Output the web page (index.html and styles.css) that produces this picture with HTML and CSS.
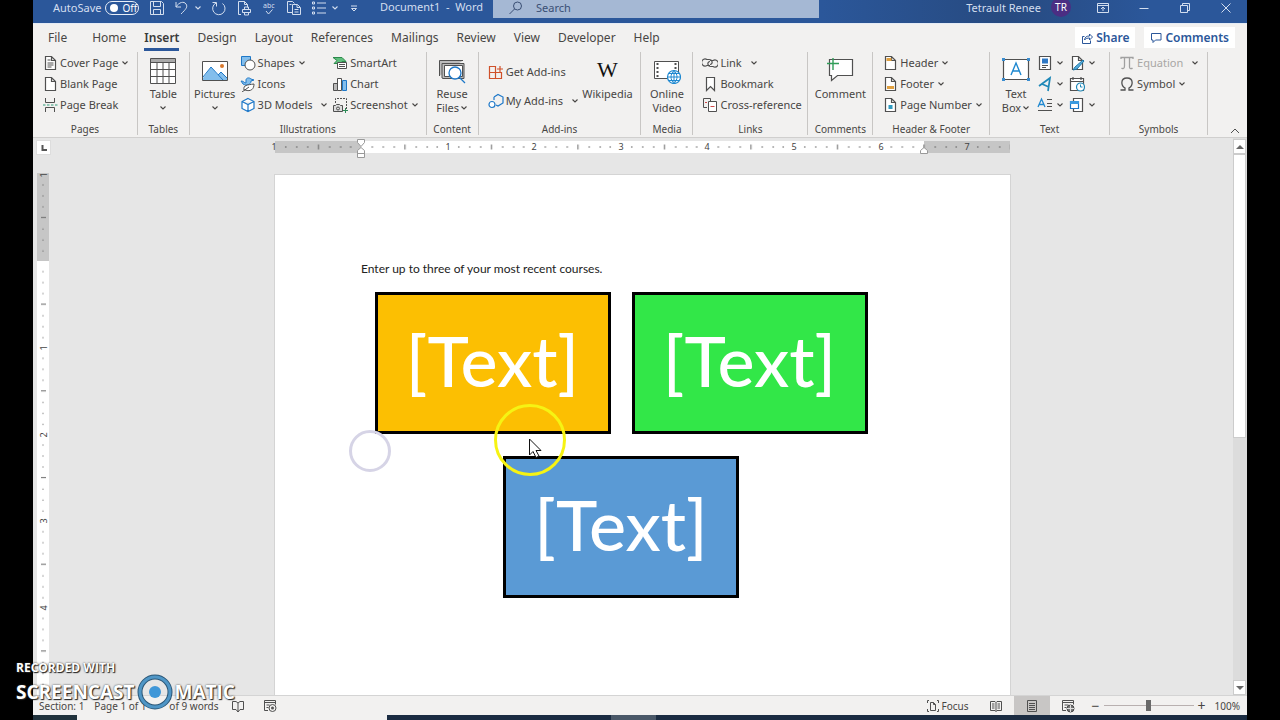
FILE: index.html
```html
<!DOCTYPE html>
<html lang="en">
<head>
<meta charset="utf-8">
<title>Document1 - Word</title>
<link rel="stylesheet" href="styles.css">
</head>
<body>
<svg class="defs" aria-hidden="true">
  <symbol id="chev" viewBox="0 0 8 8"><path d="M1.5 2.5 4 5l2.5-2.5" fill="none" stroke="currentColor" stroke-width="1.1"/></symbol>
  <symbol id="sheet" viewBox="0 0 16 16"><path d="M3.5 1.500h6l4 4v9h-10zM9.500 1.500v4h4" fill="#fff" stroke="#505050" stroke-width="1.200"/></symbol>
</svg>
<div class="app">
  <header class="titlebar">
    <div class="quick">
      <label class="autosave">AutoSave <input type="checkbox" class="sr"><span class="toggle"><i></i>Off</span></label>
      <button aria-label="Save"><svg width="16" height="16" viewBox="0 0 16 16"><path d="M1.500 1.500h11l2 2v11h-13zM4.500 1.500v5h7v-5M4.500 14.500v-5h7v5"/></svg></button>
      <button aria-label="Undo" class="undo"><svg width="16" height="16" viewBox="0 0 16 16"><path d="M2 2v5h5M2 7c3-5 8-6 10-3s0 5-5 10"/></svg><svg class="chev"><use href="#chev"/></svg></button>
      <button aria-label="Repeat"><svg width="16" height="16" viewBox="0 0 16 16"><path d="M1.500 2.500h4v4M5 3a6.200 6.200 0 1 0 6.500.5"/></svg></button>
      <button aria-label="Print preview"><svg width="16" height="16" viewBox="0 0 16 16"><path d="M5 14.500H2.500v-13h6l3 3v3M8.500 1.500v3h3M6.500 12.500v-3h8v3zM8.500 9v-2h4v2M8.500 12v3h4v-3"/></svg></button>
      <button aria-label="Spelling"><svg width="16" height="16" viewBox="0 0 16 16"><text x="2" y="8" class="abc">abc</text><path d="m5 11 2.500 3 4-4.500"/></svg></button>
      <button aria-label="Copy"><svg width="16" height="16" viewBox="0 0 16 16"><path d="M6 12.500H1.500v-11h5l2 2M6.500 4.500h5l3 3v7h-8zM11 4.500v3h3M8.500 9.500h4M8.500 12h4M3.500 4.500h2"/></svg></button>
      <button aria-label="Bullets" class="undo"><svg width="16" height="16" viewBox="0 0 16 16"><path d="M6 3h9M6 8h9M6 13h9"/><path d="M1.500 2h2v2h-2zM1.500 7h2v2h-2zM1.500 12h2v2h-2z"/></svg><svg class="chev"><use href="#chev"/></svg></button>
      <button aria-label="Customize"><svg width="16" height="16" viewBox="0 0 16 16"><path d="M3 6h6M3.500 8.500 6 11l2.500-2.500z"/></svg></button>
    </div>
    <div class="doc">Document1&nbsp; -&nbsp; Word</div>
    <label class="search"><svg width="14" height="14" viewBox="0 0 14 14"><circle cx="8.500" cy="5" r="4"/><path d="m5.500 8-5 5"/></svg><input type="text" placeholder="Search" aria-label="Search"></label>
    <div class="account"><span>Tetrault Renee</span><span class="avatar">TR</span></div>
    <div class="win">
      <button aria-label="Ribbon display options"><svg width="14" height="14" viewBox="0 0 14 14"><path d="M1.500 2.500h11v9h-11zM1.500 4.500h11M7 10V6M5 8l2-2 2 2"/></svg></button>
      <button aria-label="Minimize"><svg width="14" height="14" viewBox="0 0 14 14"><path d="M2.500 7.500h9"/></svg></button>
      <button aria-label="Restore"><svg width="14" height="14" viewBox="0 0 14 14"><path d="M2.500 4.500h7v7h-7zM4.500 4.500v-2h7v7h-2"/></svg></button>
      <button aria-label="Close"><svg width="14" height="14" viewBox="0 0 14 14"><path d="m2.500 2.500 9 9M11.500 2.500l-9 9"/></svg></button>
    </div>
  </header>

  <nav class="tabs">
    <button class="file">File</button><button>Home</button><button class="on">Insert</button><button>Design</button><button>Layout</button><button>References</button><button>Mailings</button><button>Review</button><button>View</button><button>Developer</button><button>Help</button>
    <span class="grow"></span>
    <button class="pill"><svg width="12" height="12" viewBox="0 0 12 12"><path d="M3.500 4.500h-2v7h8v-3M3.500 8c.5-3 2-4 5-4V2l3 3-3 3V6c-2 0-4 .5-5 2z"/></svg>Share</button>
    <button class="pill"><svg width="12" height="12" viewBox="0 0 12 12"><path d="M1.500 1.500h9.500v6.500H5.500L3 10.500V8H1.500z"/></svg>Comments</button>
  </nav>

  <section class="ribbon">
    <div class="group"><div class="tools pages">
      <div class="stack">
        <button><svg class="ic"><use href="#sheet"/><path d="M5.500 5h3M5.500 8h6M5.500 10h6M5.500 12h4" class="k"/></svg>Cover Page<svg class="chev"><use href="#chev"/></svg></button>
        <button><svg class="ic"><use href="#sheet"/></svg>Blank Page</button>
        <button><svg class="ic"><path d="M3.500 1v4.500h9V1M3.500 15v-4.500h9V15" class="k"/><path d="M1 8h2.500M5 8h2.500M9 8h2.500M13 8h2.500" stroke="#2e9a78"/></svg>Page Break</button>
      </div></div><h2>Pages</h2></div>
    <div class="group"><div class="tools one">
      <button class="big"><svg width="26" height="26" viewBox="0 0 26 26"><path d="M.5.5h25v25H.5z" fill="#fff"/><path d="M.5.5h25v4H.5z" fill="#aaa"/><path d="M.5.5h25v25H.5zM.5 4.500h25M.5 11.500h25M.5 18.500h25M7 4.500v21M13 4.500v21M19 4.500v21" class="k"/></svg><span>Table</span><svg class="chev"><use href="#chev"/></svg></button>
      </div><h2>Tables</h2></div>
    <div class="group"><div class="tools illus">
      <button class="big"><svg width="26" height="26" viewBox="0 0 26 26"><path d="M.5 3.500h25v19H.5z" fill="#fff"/><path d="M1 20 9 9l7 8 3-3 6 6v2H1z" fill="#83beec"/><path d="m1 19 8-10 12 13M16 17l3-3 6 6" fill="none" stroke="#1e78c8"/><circle cx="20" cy="8" r="2" fill="#d8782c"/><path d="M.5 3.500h25v19H.5z" class="k"/></svg><span>Pictures</span><svg class="chev"><use href="#chev"/></svg></button>
      <div class="stack">
        <button><svg class="ic"><path d="M1.500 1.500h9v9h-9z" fill="#83beec" stroke="#1e78c8"/><circle cx="10" cy="10" r="5" fill="#fff" stroke="#505050"/></svg>Shapes<svg class="chev"><use href="#chev"/></svg></button>
        <button><svg class="ic"><path d="M1 5c3 0 3 2 5 2V4c0-2 3-3 5-1l3 1-3 1c0 4-5 5-8 3z" fill="#83beec" stroke="#1e78c8"/><path d="M4 14c-1-5 3-5 10-6 0 5-3 8-9 6zM2 16l7-5" fill="#fff" stroke="#505050"/></svg>Icons</button>
        <button><svg class="ic"><path d="m8 1.500 6 3v7l-6 3-6-3v-7zM2 4.500l6 3 6-3M8 7.500v7" fill="#fff" stroke="#1e78c8" stroke-width="1.200"/></svg>3D Models<svg class="chev far"><use href="#chev"/></svg></button>
      </div>
      <div class="stack">
        <button><svg class="ic"><path d="M1 2.500h9l4 4h-4v2H2l3-3z" fill="#5fbf7c" stroke="#2d8a4c"/><path d="M5.500 7.500h9v6h-9z" fill="#fff" stroke="#505050"/><path d="M7 9.500h6M7 11.500h6" class="k"/></svg>SmartArt</button>
        <button><svg class="ic"><path d="M1.500 7.500h4v7h-4z" fill="#bbb" stroke="#505050"/><path d="M5.500 2.500h4v12h-4z" fill="#fff" stroke="#505050"/><path d="M10.500 4.500h4v10h-4z" fill="#83beec" stroke="#1e78c8"/></svg>Chart</button>
        <button><svg class="ic"><path d="M3.500 6V1.500h11V12" fill="none" stroke="#505050" stroke-dasharray="2 1"/><path d="M1.500 8.500h2l1-1h3l1 1h2v6h-9z" fill="#ddd" stroke="#505050"/><circle cx="6" cy="11.500" r="1.500" class="k"/><path d="M11 13.500h5M13.500 11v5" stroke="#2e8a58"/></svg>Screenshot<svg class="chev"><use href="#chev"/></svg></button>
      </div></div><h2>Illustrations</h2></div>
    <div class="group"><div class="tools one">
      <button class="big"><svg width="28" height="26" viewBox="0 0 28 26"><path d="M1.500 18V2.500H25M4 20V5.500h22v15H5z" fill="#bbb" stroke="#505050"/><path d="M6.500 7.500h18v11h-18z" fill="#fff" stroke="#505050"/><circle cx="17" cy="15" r="6" fill="#fff" stroke="#1e78c8" stroke-width="1.300"/><path d="m21 19 6 6" stroke="#1e78c8" stroke-width="1.300"/></svg><span>Reuse</span><span>Files<svg class="chev"><use href="#chev"/></svg></span></button>
      </div><h2>Content</h2></div>
    <div class="group"><div class="tools addins">
      <div class="stack two">
        <button><svg class="ic"><path d="M1.500 2.500h6v12h-6zM1.500 8.500h12v6h-12zM7.500 8.500v6" fill="none" stroke="#d0512a" stroke-width="1.200"/><path d="M9 5h6M12 2v6" stroke="#d0512a" stroke-width="1.200"/></svg>Get Add-ins</button>
        <button><svg class="ic"><path d="m6 4 4-2.500L15 4v6l-5 3-2-1M6 4v3" fill="none" stroke="#1e78c8" stroke-width="1.200"/><circle cx="4" cy="11.500" r="3" fill="#fff" stroke="#1e78c8" stroke-width="1.200"/></svg>My Add-ins<svg class="chev far"><use href="#chev"/></svg></button>
      </div>
      <button class="big"><b class="wiki">W</b><span>Wikipedia</span></button>
      </div><h2>Add-ins</h2></div>
    <div class="group"><div class="tools one">
      <button class="big"><svg width="28" height="26" viewBox="0 0 28 26"><path d="M1.500 3.500h24v17h-24z" fill="#fff" stroke="#505050"/><path d="M4.500 5v15M22.500 5v9" stroke="#505050" stroke-width="2" stroke-dasharray="2 2"/><circle cx="21" cy="19" r="6.500" fill="#fff" stroke="#1e88d0" stroke-width="1.200"/><path d="M14.500 19h13M21 12.500v13M16 15.500h10M16 22.500h10M21 12.500c-4 4-4 9 0 13 4-4 4-9 0-13" fill="none" stroke="#1e88d0"/></svg><span>Online</span><span>Video</span></button>
      </div><h2>Media</h2></div>
    <div class="group"><div class="tools links">
      <div class="stack">
        <button><svg class="ic"><path d="M8 10.500H5a3.500 3.500 0 1 1 0-6h2c4 0 4 5 1 5M8 5.500h3a3.500 3.500 0 1 1 0 6h-2c-4 0-4-5-1-5" fill="none" stroke="#505050" stroke-width="1.200"/></svg>Link<svg class="chev mid"><use href="#chev"/></svg></button>
        <button><svg class="ic"><path d="M4.500 1.500h8v13l-4-4-4 4z" fill="#fff" stroke="#505050" stroke-width="1.200"/></svg>Bookmark</button>
        <button><svg class="ic"><path d="M5 10.500H1.500v-9h7V4" fill="none" stroke="#505050"/><path d="M6.500 4.500h8v10h-8z" fill="#fff" stroke="#505050"/><path d="M3 5.500h2M8.500 9.500h4" stroke="#d04848"/></svg>Cross-reference</button>
      </div></div><h2>Links</h2></div>
    <div class="group"><div class="tools one">
      <button class="big"><svg width="28" height="26" viewBox="0 0 28 26"><path d="M3.500 1.500h23v16h-15l-6 5v-5h-2z" fill="#fff" stroke="#505050" stroke-width="1.200"/><path d="M1 5.500h12M7 0v12" stroke="#2f9d57" stroke-width="1.400"/></svg><span>Comment</span></button>
      </div><h2>Comments</h2></div>
    <div class="group"><div class="tools links">
      <div class="stack">
        <button><svg class="ic"><use href="#sheet"/><path d="M4.500 3h5v3h-5z" fill="#e0a040"/></svg>Header<svg class="chev"><use href="#chev"/></svg></button>
        <button><svg class="ic"><use href="#sheet"/><path d="M5 10h7v3H5z" fill="#e0a040"/></svg>Footer<svg class="chev"><use href="#chev"/></svg></button>
        <button><svg class="ic"><use href="#sheet"/><path d="M6.500 8h4v4h-4z" fill="#2e9ac0"/></svg>Page Number<svg class="chev"><use href="#chev"/></svg></button>
      </div></div><h2>Header &amp; Footer</h2></div>
    <div class="group"><div class="tools textg">
      <button class="big"><svg width="30" height="26" viewBox="0 0 30 26"><path d="M2.500 1.500h25v20h-25z" fill="#fff" stroke="#505050" stroke-width="1.200"/><path d="M1 0h3v3H1zM26 0h3v3h-3zM1 20h3v3H1zM26 20h3v3h-3z" fill="#3a8dd0"/><path d="m10 17 5-12 5 12M12 13h6" fill="none" stroke="#1e88d0" stroke-width="1.400"/></svg><span>Text</span><span>Box<svg class="chev"><use href="#chev"/></svg></span></button>
      <div class="stack">
        <button aria-label="Quick Parts"><svg class="ic"><path d="M2.500 1.500h11v13h-11z" fill="#fff" stroke="#505050" stroke-width="1.200"/><path d="M5 3.500h6v5H5z" fill="#2f78c4"/><path d="M5 10.500h6M5 12.500h4" class="k"/></svg><svg class="chev"><use href="#chev"/></svg></button>
        <button aria-label="WordArt"><svg class="ic"><path d="M2 10 13 2l-2 13M5 8l7 3" fill="none" stroke="#1e88b8" stroke-width="1.700"/></svg><svg class="chev"><use href="#chev"/></svg></button>
        <button aria-label="Drop Cap"><svg class="ic"><path d="m1 10 3.500-8L8 10M2.500 7.500h4" fill="none" stroke="#1e88d0" stroke-width="1.300"/><path d="M10 2.500h5M10 6.500h5M10 9.500h5M1 13.500h14" class="k"/></svg><svg class="chev"><use href="#chev"/></svg></button>
      </div>
      <div class="stack">
        <button aria-label="Signature Line"><svg class="ic"><use href="#sheet"/><path d="m14 5-8 7-2 3 4-1 7-8z" fill="#5aaede" stroke="#1e78a8"/></svg><svg class="chev"><use href="#chev"/></svg></button>
        <button aria-label="Date and Time"><svg class="ic"><path d="M1.500 2.500h13v12h-13zM1.500 5.500h13M4 1v3M12 1v3" fill="#fff" stroke="#505050" stroke-width="1.200"/><circle cx="11.500" cy="11" r="4" fill="#fff" stroke="#1e88b8" stroke-width="1.200"/><path d="M11.500 8.500V11h2" fill="none" stroke="#1e88b8"/></svg></button>
        <button aria-label="Object"><svg class="ic"><path d="M4.500 1.500h9v13h-9z" fill="#fff" stroke="#505050" stroke-width="1.200"/><path d="M1.500 4.500h8v7h-8z" fill="#fff" stroke="#1e78c8" stroke-width="1.200"/><path d="M1 4h9v3H1z" fill="#3a9ae0"/></svg><svg class="chev"><use href="#chev"/></svg></button>
      </div></div><h2>Text</h2></div>
    <div class="group"><div class="tools links">
      <div class="stack">
        <button class="off"><svg class="ic"><path d="M2 4V2.500h12V4M5.500 3v8c0 3-2 3-3 2M10.500 3v9c0 2 2 2 3 1" fill="none" stroke="#a0a0a0" stroke-width="1.300"/></svg>Equation<svg class="chev mid"><use href="#chev"/></svg></button>
        <button><svg class="ic"><path d="M1.500 14H6v-2C2 10 1 2 8 2s6 8 2 10v2h4.500" fill="none" stroke="#505050" stroke-width="1.300"/></svg>Symbol<svg class="chev"><use href="#chev"/></svg></button>
      </div></div><h2>Symbols</h2></div>
    <div class="collapse"><button aria-label="Collapse the Ribbon"><svg width="10" height="8" viewBox="0 0 10 8"><path d="m1 6 4-4 4 4" class="k"/></svg></button></div>
  </section>

  <main class="work">
    <div class="corner"><svg width="8" height="8" viewBox="0 0 8 8"><path d="M2.500 1v5H7" fill="none" stroke="#555" stroke-width="2"/></svg></div>
    <div class="hruler"><svg width="735" height="22" viewBox="0 0 735 22">
      <defs><pattern id="ticks" width="86.500" height="12" patternUnits="userSpaceOnUse" y="3"><path d="M10 6h1.500M21 6h1.500M32 6h1.500M54 6h1.500M65 6h1.500M75 6h1.500" stroke="#555"/><path d="M43.500 3.500v5" stroke="#666"/></pattern></defs>
      <path d="M0 3h735v12H0z" fill="#c6c6c6"/><path d="M86 3h563v12H86z" fill="#fff"/>
      <path d="M0 3h735v12H0z" fill="url(#ticks)"/>
      <g class="num"><text x="-1" y="12">1</text><text x="173" y="12">1</text><text x="259" y="12">2</text><text x="346" y="12">3</text><text x="432" y="12">4</text><text x="519" y="12">5</text><text x="606" y="12">6</text><text x="692" y="12">7</text></g>
      <path d="M82.500 1.500h7v3l-3.500 4-3.500-4zM86 9.500l3.500 3v7h-7v-7zM82.500 15.500h7M649 9.500l3.500 3v3h-7v-3z" fill="#fff" stroke="#999"/>
    </svg></div>
    <div class="scroll">
      <button aria-label="Scroll up"><svg width="8" height="6" viewBox="0 0 8 6"><path d="M0 5h8L4 1z" fill="#666"/></svg></button>
      <div class="track"><div class="thumb"></div></div>
      <button aria-label="Scroll down"><svg width="8" height="6" viewBox="0 0 8 6"><path d="M0 1h8L4 5z" fill="#666"/></svg></button>
    </div>
    <div class="vruler"><svg width="12" height="540" viewBox="0 0 12 540">
      <defs><pattern id="vticks" width="12" height="86.700" patternUnits="userSpaceOnUse" y="1"><path d="M5.500 11h1M5.500 22h1M5.500 33h1M5.500 55h1M5.500 66h1M5.500 77h1" stroke="#555"/><path d="M4 43.500h5" stroke="#666"/></pattern></defs>
      <path d="M0 0h12v540H0z" fill="#fff"/><path d="M0 0h12v88H0z" fill="#c6c6c6"/>
      <path d="M0 0h12v540H0z" fill="url(#vticks)"/>
      <g class="num"><text transform="translate(10 2) rotate(-90)">1</text><text transform="translate(10 175) rotate(-90)">1</text><text transform="translate(10 262) rotate(-90)">2</text><text transform="translate(10 348) rotate(-90)">3</text><text transform="translate(10 435) rotate(-90)">4</text></g>
    </svg></div>
    <div class="canvas">
      <article class="page">
        <p>Enter up to three of your most recent courses.</p>
        <div class="shapes"><div class="shape gold">[Text]</div><div class="shape green">[Text]</div><div class="shape blue">[Text]</div></div>
      </article>
    </div>
  </main>

  <footer class="status">
    <span>Section: 1</span><span class="pg">Page 1 of 1</span><span class="words">of 9 words</span>
    <button aria-label="Proofing"><svg width="14" height="14" viewBox="0 0 14 14"><path d="M1.500 2.500H5l2 1.500 2-1.500h3.500v8H9L7 13l-2-2.500H1.500zM7 4v9" class="k"/></svg></button>
    <button aria-label="Macros" class="macro"><svg width="14" height="14" viewBox="0 0 14 14"><path d="M5 11.500H1.500v-10h11v4M1.500 3.500h11M3.500 6h3M3.500 8.500h2" class="k"/><circle cx="9.500" cy="9" r="3.500" class="k"/><circle cx="9.500" cy="9" r="1.500" fill="#555"/></svg></button>
    <span class="grow"></span>
    <button class="focus"><svg width="14" height="14" viewBox="0 0 14 14"><path d="M1.500 4V1.500H3M1.500 10v2.500H3M11 1.500h1.500V4M11 12.500h1.500V10M4.500 3.500h3l2 2v6h-5zM7.500 3.500v2h2" class="k"/></svg>Focus</button>
    <button class="view" aria-label="Read Mode"><svg width="14" height="14" viewBox="0 0 14 14"><path d="M1.500 2.500H6l1 1 1-1h4.500v9H8l-1 1-1-1H1.500zM7 3.500v9M3 5h2.500M3 7h2.500M3 9h2.500M8.500 5H11M8.500 7H11M8.500 9H11" class="k"/></svg></button>
    <button class="view sel" aria-label="Print Layout"><svg width="14" height="14" viewBox="0 0 14 14"><path d="M2.500 1.500h9v11h-9zM4 4.500h6M4 6.500h6M4 8.500h6M4 10.500h6" class="k"/></svg></button>
    <button class="view" aria-label="Web Layout"><svg width="14" height="14" viewBox="0 0 14 14"><path d="M5 11.500H1.500v-10h11v4M1.500 3.500h11M3.500 6h4M3.500 8.500h2" class="k"/><circle cx="9.500" cy="9.500" r="3.500" fill="#777" stroke="#444"/><path d="M6 9.500h7M9.500 6v7" stroke="#ddd"/></svg></button>
    <div class="zoomer"><button aria-label="Zoom out">−</button><input type="range" min="0" max="100" value="50" aria-label="Zoom"><button aria-label="Zoom in">+</button></div>
    <span class="pct">100%</span>
  </footer>
  <div class="taskbar"><i class="t1"></i><i class="t2"></i><i class="t3"></i></div>
</div>

<svg class="overlay halo" width="44" height="44" viewBox="0 0 44 44"><circle cx="22" cy="22" r="19.500" fill="none" stroke="#d6d4e6" stroke-width="3"/></svg>
<svg class="overlay pointer" width="74" height="74" viewBox="0 0 74 74"><circle cx="37" cy="37" r="34.500" fill="none" stroke="#f6f313" stroke-width="3"/><path d="M36.500 36v16l3.500-3.500 3 6 3-1.500-3-5.500h5z" fill="#fff" stroke="#111"/></svg>
<div class="overlay mark"><div class="rec">RECORDED WITH</div><div class="brand"><span>SCREENCAST</span><svg width="36" height="36" viewBox="0 0 36 36"><circle cx="18" cy="18" r="15" fill="none" stroke="#2c5878" stroke-width="5"/><circle cx="18" cy="18" r="15" fill="none" stroke="#4f96c6" stroke-width="3"/><circle cx="18" cy="18" r="6" fill="#3f97d8"/></svg><span>MATIC</span></div></div>
</body>
</html>
```
FILE: styles.css
```css
* { box-sizing: border-box; }
body { margin: 0; padding: 0 33px; background: #000; font: 11px/14px "Noto Sans", "Open Sans", sans-serif; color: #484644; overflow: hidden; }
button { font: inherit; color: inherit; background: none; border: 0; padding: 0; margin: 0; display: flex; align-items: center; white-space: nowrap; }
svg { flex: none; display: block; }
.defs { position: absolute; width: 0; height: 0; }
.sr { position: absolute; opacity: 0; width: 1px; height: 1px; }
.grow { flex: 1; }
.k { fill: none; stroke: #505050; }
.chev { width: 8px; height: 8px; margin-left: 1px; color: #484644; }
.app { height: 100vh; display: flex; flex-direction: column; background: #f2f1f0; }

.titlebar { height: 23px; flex: none; background: linear-gradient(90deg, #2b579a 0 65%, #274a80 80%, #2b579a 92%); color: #d3deef; display: flex; align-items: flex-start; font-size: 11px; }
.titlebar svg { fill: none; stroke: currentColor; }
.quick { display: flex; align-items: center; height: 16px; padding-left: 20px; gap: 9px; width: 347px; flex: none; }
.quick .chev { color: inherit; stroke: none; margin-left: 4px; }
.autosave { display: flex; align-items: center; gap: 4px; margin-right: 1px; white-space: nowrap; height: 14px; }
.toggle { display: flex; align-items: center; gap: 4px; width: 34px; height: 14px; border: 1px solid #e8eef8; border-radius: 7px; padding-left: 4px; font-size: 10px; color: #fff; }
.toggle i { width: 8px; height: 8px; border-radius: 50%; background: #fff; }
.abc { font-size: 7px; fill: currentColor; stroke: none; }
.doc { width: 113px; height: 14px; flex: none; white-space: nowrap; }
.search { flex: 0 1 326px; height: 18px; background: #a5b8d4; color: #3a4f74; display: flex; align-items: center; gap: 13px; padding: 0 16px 3px; }
.search input { border: 0; background: none; font: inherit; color: inherit; padding: 0; min-width: 0; flex: 1; outline: 0; }
.search input::placeholder { color: inherit; opacity: 1; }
.account { flex: 1; display: flex; justify-content: flex-end; align-items: center; gap: 10px; height: 16px; white-space: nowrap; }
.avatar { width: 20px; height: 20px; margin-bottom: 2px; border-radius: 50%; background: #4b2e83; color: #fff; text-align: center; line-height: 20px; font-size: 10px; }
.win { display: flex; height: 16px; gap: 27px; padding: 0 14px 0 25px; }

.tabs { height: 29px; flex: none; display: flex; align-items: flex-start; padding: 3px 12px 0 15px; gap: 18px; font-size: 12px; border-top: 1px solid #e4ebf5; }
.tabs button { height: 21px; padding: 0; }
.tabs .file { margin-right: 7px; }
.tabs .on { font-weight: 600; box-shadow: 0 3px #2b579a; color: #3a3a3a; }
.tabs .pill { background: #fff; color: #2b579a; font-weight: 600; padding: 0 6px; gap: 3px; height: 21px; }
.pill + .pill { margin-left: -9px; }
.pill svg { fill: none; stroke: #2b579a; }

.ribbon { flex: none; display: grid; grid-template-columns: 105fr 52fr 237fr 52fr 163fr 52fr 115fr 65fr 117fr 120fr 98fr 39fr; height: 86px; padding-bottom: 2px; border-bottom: 1px solid #d0cfce; }
.group { display: flex; flex-direction: column; border-right: 1px solid #c8c6c4; min-width: 0; }
.group h2 { margin: 0; font-size: 10px; line-height: 12px; font-weight: 400; text-align: center; white-space: nowrap; }
.tools { flex: 1; display: grid; align-items: start; min-height: 0; }
.pages, .links { padding-left: 9px; }
.one { justify-items: center; }
.illus { grid-template-columns: 50fr 93fr 94fr; }
.addins { grid-template-columns: 92fr 56fr; padding: 0 5px 0 9px; }
.textg { grid-template-columns: 42fr 33fr 28fr; padding: 0 12px 0 5px; }
.stack button { height: 21px; gap: 2px; }
.stack.two { padding-top: 5px; }
.stack.two button { height: 29px; }
.stack .chev.far, .stack .chev.mid { margin-left: 6px; }
.ic { width: 16px; height: 16px; }
.off { color: #a8a6a4; }
.big { flex-direction: column; justify-self: center; padding-top: 6px; }
.big > svg:first-child, .wiki { margin-bottom: 3px; }
.big span { display: flex; align-items: center; }
.big > .chev { margin: 3px 0 0; }
.wiki { font: 22px/24px "Liberation Serif", serif; color: #111; padding-bottom: 2px; }
.collapse { display: flex; justify-content: center; align-items: flex-end; padding-left: 14px; }

.work { flex: 1; min-height: 0; display: grid; grid-template: 20px minmax(0, 1fr) / 19px minmax(0, 1fr) 14px; background: #e6e6e6; }
.corner { margin: 2px 1px 3px 3px; background: #fff; border: 1px solid #ddd; display: grid; place-items: center; }
.hruler { display: flex; justify-content: center; }
.hruler svg, .vruler svg { overflow: visible; }
.num { font-size: 9px; fill: #444; text-anchor: middle; }
.scroll { grid-row: 1 / 3; grid-column: 3; display: flex; flex-direction: column; padding: 1px 1px 0 0; background: #dcdcdc; }
.scroll button { height: 15px; background: #fff; border: 1px solid #ccc; justify-content: center; flex: none; }
.track { flex: 1; }
.thumb { height: 54%; background: #fff; border: 1px solid #ccc; }
.vruler { padding: 15px 0 0 4px; overflow: hidden; }
.canvas { overflow: hidden; padding-top: 17px; }
.page { width: 735px; min-height: 100%; margin: 0 auto; padding: 85px 86px 0; background: #fff; box-shadow: 0 0 0 1px #d4d4d4; color: #222; }
.page p { margin: 0 0 14px; font: 12px/18px Lato, sans-serif; }
.shapes { width: 494px; margin-left: 13px; display: flex; flex-wrap: wrap; justify-content: center; gap: 22px 21px; }
.shape { width: 236px; height: 142px; padding-bottom: 6px; border: 3px solid #000; color: #fff; display: grid; place-items: center; font: 500 70px/80px Lato, sans-serif; }
.gold { background: #fcbf02; }
.green { background: #32e748; }
.blue { background: #5a9ad5; }

.status { height: 20px; flex: none; display: flex; align-items: center; padding: 0 7px 0 6px; font-size: 10px; border-top: 1px solid #d4d4d4; background: #f2f1f0; white-space: nowrap; }
.status button { height: 100%; }
.pg { margin-left: 10px; width: 54px; }
.words { margin: 0 12px 0 21px; }
.macro { margin-left: 18px; }
.focus { gap: 1px; margin-right: 10px; }
.view { width: 36px; justify-content: center; }
.sel { background: #c8c6c5; }
.zoomer { display: flex; align-items: center; gap: 4px; margin: 0 9px 0 5px; height: 100%; font-size: 14px; }
.zoomer input { appearance: none; width: 90px; height: 12px; margin: 0; background: linear-gradient(#b8b0b0, #b8b0b0) center / 100% 1px no-repeat; }
.zoomer input::-webkit-slider-thumb { appearance: none; width: 5px; height: 11px; background: #6a6a6a; }
.taskbar { flex: none; height: 5px; display: flex; background: #1b2c42; }
.t1 { width: 44px; background: #20323c; }
.t2 { width: 310px; background: #f2f1f0; }
.t3 { margin-left: 224px; width: 45px; background: #4a5868; }

.overlay { position: absolute; pointer-events: none; }
.halo { left: 348px; top: 429px; }
.pointer { left: 493px; top: 403px; }
.mark { left: 16px; top: 661px; color: #fff; font-family: "Open Sans", sans-serif; font-weight: 700; text-shadow: 1px 1px 1px #222, 0 0 2px #333; }
.rec { font-size: 12px; line-height: 14px; }
.brand { display: flex; align-items: center; gap: 2px; font-size: 19px; line-height: 34px; height: 34px; }
```
